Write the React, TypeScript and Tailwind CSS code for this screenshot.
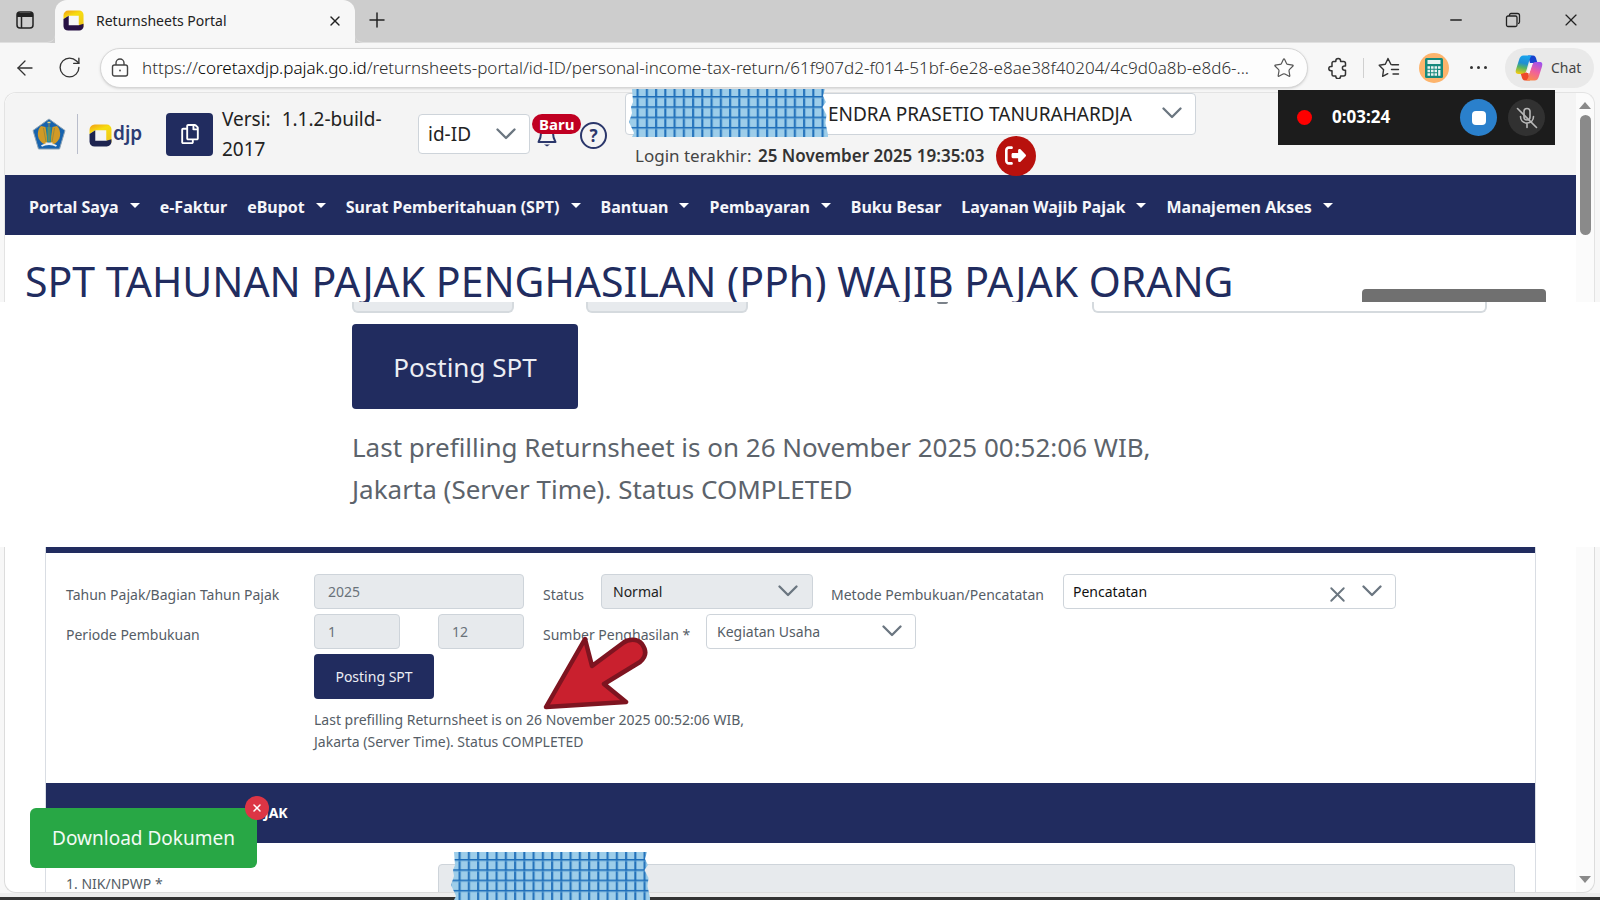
import React from "react";
import { ArrowLeft, Minus, Plus, RotateCw, Star, X } from "lucide-react";
import { FaRegCopy } from "react-icons/fa";
import { FaRightFromBracket } from "react-icons/fa6";

function ChevronDown({ className }: { className: string }) {
  return (
    <svg viewBox="0 0 20 12" fill="none" stroke="#6b7680" strokeWidth="2.300" strokeLinecap="round" strokeLinejoin="round" className={`pointer-events-none absolute h-3 w-5 ${className}`}>
      <path d="M1.500 1.500 10 10l8.500-8.500" />
    </svg>
  );
}

function CoretaxMark({ id, className, dark }: { id: string; className: string; dark: string }) {
  return (
    <svg viewBox="0 0 22 22" className={className} aria-hidden="true">
      <defs>
        <linearGradient id={id} x1="0.150" y1="0" x2="0.600" y2="1">
          <stop offset="0" stopColor="#f2a516" />
          <stop offset="0.350" stopColor="#f7dd10" />
          <stop offset="1" stopColor="#eec81c" />
        </linearGradient>
      </defs>
      <path d="M5.500 .5H17A4.500 4.500 0 0 1 21.500 5v13L16.500 15.500V6H6L.5 9.500V5.500A5 5 0 0 1 5.500 .5Z" fill={`url(#${id})`} />
      <path d="M.5 9.500 6 6v10h10.500L21.500 14.500V17A4.500 4.500 0 0 1 17 21.500H5.500A5 5 0 0 1 .5 17Z" fill={dark} />
    </svg>
  );
}

function MinistryEmblem() {
  return (
    <svg viewBox="0 0 34 32" className="h-8 w-[34px] shrink-0" role="img" aria-label="Kementerian Keuangan">
      <path d="M17 1 33 12.500 27.500 31H6.500L1 12.500Z" fill="#1763ae" stroke="#8da3b4" strokeWidth="1" strokeLinejoin="round" />
      <path d="M9 8C4 13 4.500 23 13 26.500l3-2.500-2.500-15Z" fill="#d19a26" />
      <path d="M25 8c5 5 4.500 15-4 18.500L18 24l2.500-15Z" fill="#d19a26" />
      <path d="M14.500 9h5l-.5 15h-4Z" fill="#2b8f95" />
      <path d="M17 6v17M11.500 10l2.500 14M22.500 10 20 24" stroke="#9c8a3a" strokeWidth="1" />
      <path d="M9.500 28c4-2.500 11-2.500 15 0M13.500 25.500h7" stroke="#e9eef2" strokeWidth="1.800" fill="none" />
      <path d="M15.500 4.500h3" stroke="#e8d77a" strokeWidth="1.500" />
    </svg>
  );
}

function CopilotLogo() {
  return (
    <svg viewBox="0 0 28 26" className="h-[26px] w-7 shrink-0" aria-hidden="true">
      <defs>
        <linearGradient id="cpA" x1="0.500" y1="0" x2="0.300" y2="1">
          <stop offset="0" stopColor="#18a4ee" />
          <stop offset="0.400" stopColor="#1f8ed2" />
          <stop offset="0.650" stopColor="#58b461" />
          <stop offset="1" stopColor="#f2cb12" />
        </linearGradient>
        <linearGradient id="cpB" x1="0.700" y1="0" x2="0.300" y2="1">
          <stop offset="0" stopColor="#a052ec" />
          <stop offset="0.500" stopColor="#f0609c" />
          <stop offset="1" stopColor="#fb8a4c" />
        </linearGradient>
      </defs>
      <path d="M13 .5h5c2 0 2.600 1.300 3.200 3.200l1.300 4.300H15Z" fill="#1442cf" />
      <path d="M8.500 .5h8.500c-1.500 1-2 2.600-2.600 4.600L11.500 15c-.8 2.800-1.800 4-4.500 4H3.500C.5 19 .3 17 1 14.500L4 5C4.900 2 6 .5 8.500 .5Z" fill="url(#cpA)" />
      <path d="M15 25.500h-5c-2 0-2.600-1.300-3.200-3.200L5.800 18.900 13 17Z" fill="#ee4a2a" />
      <path d="M19.500 25.500H11c1.500-1 2-2.600 2.600-4.600L16.500 11c.8-2.800 1.800-4 4.500-4h3.500c3 0 3.200 2 2.500 4.500L24 21c-.9 3-2 4.500-4.500 4.500Z" fill="url(#cpB)" />
      <path d="M15 8h3l-3.500 10h-3Z" fill="#f7f3f6" />
    </svg>
  );
}

function Tape({ id, className }: { id: string; className: string }) {
  return (
    <svg viewBox="0 0 199 48" className={`pointer-events-none absolute h-12 w-[199px] ${className}`} aria-hidden="true">
      <defs>
        <pattern id={id} width="9.250" height="10.300" patternUnits="userSpaceOnUse" x="1" y="7">
          <rect width="9.250" height="10.300" fill="#9dcde9" />
          <rect width="1.700" height="10.300" x="6.600" fill="#1b6cb8" />
          <rect width="0.900" height="10.300" x="8.300" fill="#6fadd9" />
          <rect width="9.250" height="1.600" y="0" fill="#1b6cb8" />
          <rect width="9.250" height="0.700" y="1.600" fill="#6fadd9" />
        </pattern>
      </defs>
      <path d="M3 0H196L194 7l3 6-3.500 5 4 8-1 8 3 14H3L5 44 0 33l3-9-1-6 2-5Z" fill={`url(#${id})`} />
    </svg>
  );
}

function TabStrip() {
  return (
    <header className="flex h-[43px] shrink-0 items-stretch bg-[#cdcdcd]">
      <div className="flex w-[55px] items-center rounded-br-lg border-b border-[#e0e0e0] pb-[2px] pl-4">
        <button aria-label="Tab actions">
          <svg viewBox="0 0 18 18" className="h-[18px] w-[18px]" fill="none" stroke="#222" strokeWidth="1.500">
            <rect x="1" y="1" width="16" height="16" rx="3" />
            <path d="M1 3.500h16M1 4.500h16" strokeWidth="3" />
            <path d="M5.500 5v12" />
          </svg>
        </button>
      </div>
      <div className="flex w-[300px] items-center rounded-t-xl bg-[#f7f7f7] pb-[2px] pl-2 pr-3">
        <CoretaxMark id="tabMark" className="h-[21px] w-[21px]" dark="#271144" />
        <span className="ml-3 flex-1 text-[14px] leading-5 text-[#222]">Returnsheets Portal</span>
        <button aria-label="Close tab"><X className="h-4 w-4" strokeWidth={2} color="#222" /></button>
      </div>
      <div className="flex flex-1 items-center rounded-bl-lg border-b border-[#e0e0e0] pb-[2px] pl-[10px] pr-[19px]">
        <button aria-label="New tab"><Plus className="h-6 w-6" strokeWidth={1.500} color="#222" /></button>
        <div className="ml-auto flex items-center gap-[40px]">
          <button aria-label="Minimize"><Minus className="h-[18px] w-[18px]" strokeWidth={1.800} color="#222" /></button>
          <button aria-label="Restore">
            <svg viewBox="0 0 16 16" className="h-4 w-4" fill="none" stroke="#222" strokeWidth="1.300">
              <rect x="1.500" y="4" width="10.500" height="10.500" rx="1.500" />
              <path d="M4.500 4V3a1.500 1.500 0 0 1 1.500-1.500h6.500A2 2 0 0 1 14.500 3.500V10A1.500 1.500 0 0 1 13 11.500" />
            </svg>
          </button>
          <button aria-label="Close window"><X className="h-5 w-5" strokeWidth={1.400} color="#222" /></button>
        </div>
      </div>
    </header>
  );
}

function Toolbar() {
  return (
    <div className="flex h-[49px] shrink-0 items-center bg-[#f7f7f7] pr-[6px]">
      <button aria-label="Back" className="ml-[13px]"><ArrowLeft className="h-6 w-6" strokeWidth={1.300} color="#333" /></button>
      <button aria-label="Reload" className="ml-[20px]"><RotateCw className="h-[25px] w-[25px]" strokeWidth={1.300} color="#333" /></button>
      <div className="ml-[18px] flex h-10 min-w-0 flex-1 items-center rounded-full border border-[#d6d6d6] bg-[#fdfdfd] pl-[10px] pr-3 shadow-sm">
        <svg viewBox="0 0 18 20" className="h-5 w-[18px] shrink-0" fill="none" stroke="#444" strokeWidth="1.400">
          <rect x="1.500" y="7" width="15" height="11" rx="2" />
          <path d="M5 7V5a4 4 0 0 1 8 0v2" />
          <circle cx="9" cy="12.500" r="0.900" fill="#444" stroke="none" />
        </svg>
        <p className="ml-[13px] min-w-0 flex-1 whitespace-nowrap text-[17px] font-light leading-6 text-[#2f2f2f]">
          https://<span className="text-black">coretaxdjp.pajak.go.id</span>/returnsheets-portal/id-ID/personal-income-tax-return/61f907d2-f014-51bf-6e28-e8ae38f40204/4c9d0a8b-e8d6-...
        </p>
        <button aria-label="Favorite"><Star className="h-[22px] w-[22px]" strokeWidth={1.300} color="#555" /></button>
      </div>
      <button aria-label="Extensions" className="ml-[20px]">
        <svg viewBox="0 0 20 22" className="h-[22px] w-5" fill="none" stroke="#333" strokeWidth="1.500" strokeLinejoin="round">
          <path d="M5.500 4.500h2.300V3.800a2.400 2.400 0 0 1 4.800 0v.7H15.500a2 2 0 0 1 2 2V9h-1a2 2 0 0 0 0 4.200h1V17a2 2 0 0 1-2 2h-2.900v.3a2.400 2.400 0 0 1-4.800 0V19H5.500A1.500 1.500 0 0 1 4 17.500v-3.700H3a2.200 2.200 0 0 1 0-4.400h1V6A1.500 1.500 0 0 1 5.500 4.500Z" />
        </svg>
      </button>
      <span className="ml-[15px] h-5 w-px bg-[#d0d0d0]" />
      <button aria-label="Favorites" className="ml-[14px]">
        <svg viewBox="0 0 22 22" className="h-[22px] w-[22px]" fill="none" stroke="#333" strokeWidth="1.400" strokeLinejoin="round" strokeLinecap="round">
          <path d="M13 7.500 10 1.500 7.300 7.300 1.200 8.200l4.400 4.500-1 6.700 5.200-2.700 M14 7.800h6.500M13.500 12.500h7M15 17h5.500" />
        </svg>
      </button>
      <button aria-label="Tax calculator" className="ml-[19px] flex h-[30px] w-[30px] items-center justify-center rounded-full bg-[#fdb46c]">
        <svg viewBox="0 0 18 20" className="h-5 w-[18px]">
          <rect width="18" height="20" rx="1.500" fill="#15897c" />
          <rect x="2.500" y="2" width="13" height="4" fill="#e9f3f1" />
          <path d="M2.500 9.500h13M2.500 13h9.500M2.500 16.500h9.500" stroke="#e9f3f1" strokeWidth="2.300" strokeDasharray="2.600 0.900" />
          <path d="M14.300 12v5.800" stroke="#e9f3f1" strokeWidth="2.300" />
        </svg>
      </button>
      <button aria-label="Settings" className="ml-[17px] flex gap-1 p-1">
        <span className="h-[3px] w-[3px] rounded-full bg-[#333]" />
        <span className="h-[3px] w-[3px] rounded-full bg-[#333]" />
        <span className="h-[3px] w-[3px] rounded-full bg-[#333]" />
      </button>
      <button className="ml-[14px] flex h-10 w-[89px] items-center gap-2 rounded-full bg-[#e9e9e9] pl-[10px] text-[14px] text-[#444]">
        <CopilotLogo />
        Chat
      </button>
    </div>
  );
}

function SiteHeader() {
  return (
    <div className="flex h-[82px] items-center rounded-tl-xl bg-[#f4f4f4] pl-[27px]">
      <MinistryEmblem />
      <span className="ml-[11px] h-10 w-px bg-[#b9bdcb]" />
      <div className="ml-[11px] flex w-[56px] items-center gap-px pt-[2px]">
        <CoretaxMark id="headMark" className="h-[23px] w-[23px] shrink-0" dark="#1d2450" />
        <span className="pb-1 text-[19px] font-semibold leading-6 text-[#2c3c73]">djp</span>
      </div>
      <button aria-label="Salin versi" className="ml-[21px] flex h-[43px] w-[47px] items-center justify-center rounded bg-[#212c5f] text-white">
        <FaRegCopy className="h-5 w-5" />
      </button>
      <p className="ml-[9px] w-[186px] text-[19px] leading-[30px] text-[#222]">
        Versi: <span className="ml-[6px]">1.1.2-build-</span><br />2017
      </p>
      <div className="relative ml-[10px]">
        <select aria-label="Bahasa" className="h-10 w-[112px] appearance-none rounded border border-[#ced4da] bg-white pl-[9px] text-[19px] text-[#222]">
          <option>id-ID</option>
        </select>
        <ChevronDown className="right-[14px] top-[14px]" />
      </div>
      <div className="relative ml-[7px] flex items-center pt-[3px]">
        <button aria-label="Notifikasi">
          <svg viewBox="0 0 20 22" className="h-[22px] w-5" fill="none" stroke="#2b376b" strokeWidth="2" strokeLinejoin="round">
            <path d="M10 1.500c-4 0-6 3-6 6.500 0 4-1 6.500-2.500 9h17C17 14.500 16 12 16 8c0-3.500-2-6.500-6-6.500Z" />
            <path d="M7 19.500h6l-3 2Z" fill="#2b376b" stroke="none" />
          </svg>
        </button>
        <span className="absolute -left-[5px] -top-[5px] rounded-full bg-[#c00022] px-[7px] text-[15px] font-bold leading-5 text-white">Baru</span>
        <button aria-label="Bantuan" className="ml-[23px] flex h-[27px] w-[27px] items-center justify-center rounded-full border-2 border-[#2b376b] text-[17px] font-bold leading-5 text-[#2b376b]">?</button>
      </div>
      <div className="ml-[18px] flex w-[571px] flex-col self-stretch">
        <div className="relative">
          <select aria-label="Wajib pajak" className="h-[42px] w-full appearance-none rounded border border-[#ced4da] bg-white pl-[202px] text-[19px] text-[#222]">
            <option>ENDRA PRASETIO TANURAHARDJA</option>
          </select>
          <ChevronDown className="right-[14px] top-[14px]" />
          <Tape id="tapeName" className="-top-[4px] left-[4px]" />
        </div>
        <div className="flex h-10 items-center pl-[10px] pt-px text-[17px] text-[#444]">
          <span className="w-[123px]">Login terakhir:</span>
          <strong className="font-semibold text-[#333]">25 November 2025 19:35:03</strong>
          <button aria-label="Keluar" className="ml-[11px] flex h-10 w-10 items-center justify-center rounded-full bg-[#b8110d] text-white">
            <FaRightFromBracket className="h-[21px] w-[21px]" />
          </button>
        </div>
      </div>
    </div>
  );
}

const MENU: { label: string; caret: boolean }[] = [
  { label: "Portal Saya", caret: true },
  { label: "e-Faktur", caret: false },
  { label: "eBupot", caret: true },
  { label: "Surat Pemberitahuan (SPT)", caret: true },
  { label: "Bantuan", caret: true },
  { label: "Pembayaran", caret: true },
  { label: "Buku Besar", caret: false },
  { label: "Layanan Wajib Pajak", caret: true },
  { label: "Manajemen Akses", caret: true },
];

function SiteNav() {
  return (
    <nav className="flex h-[60px] items-center gap-5 bg-[#212c5f] pl-6 pt-[3px]">
      {MENU.map((item) => (
        <a key={item.label} href="#" className="flex items-center gap-[11px] whitespace-nowrap text-[16px] font-bold text-[#f5f6fa]">
          {item.label}
          {item.caret && <span className="mb-[3px] border-x-[5px] border-t-[5px] border-x-transparent border-t-white" />}
        </a>
      ))}
    </nav>
  );
}

function PostingCallout() {
  return (
    <section className="relative z-10 h-[245px] shrink-0 bg-white pl-[352px]">
      <div className="flex h-[11px]">
        <span className="w-[162px] rounded-b-md border-2 border-t-0 border-[#d5dade] bg-[#e7eaed]" />
        <span className="ml-[72px] w-[162px] rounded-b-md border-2 border-t-0 border-[#d5dade] bg-[#e7eaed]" />
        <span className="ml-[189px] h-[2px] w-[11px] rounded-b-full bg-[#7b828a]" />
        <span className="ml-[144px] w-[395px] rounded-b-md border-2 border-t-0 border-[#d5dade] bg-white" />
      </div>
      <button className="mt-[11px] block h-[85px] w-[226px] rounded bg-[#212c5f] pt-[2px] text-[26px] text-[#eceef4]">Posting SPT</button>
      <p className="mt-[17px] text-[26px] leading-[42px] text-[#5c636b]">
        Last prefilling Returnsheet is on 26 November 2025 00:52:06 WIB,<br />Jakarta (Server Time). Status COMPLETED
      </p>
    </section>
  );
}

function ReturnForm() {
  return (
    <form className="px-5 pt-[21px] text-[14px] text-[#555d66]">
      <div className="flex h-[35px] items-center">
        <label htmlFor="year" className="w-[248px] pt-[6px]">Tahun Pajak/Bagian Tahun Pajak</label>
        <input id="year" disabled value="2025" className="h-[35px] w-[210px] rounded border border-[#ced4da] bg-[#e7eaed] px-[13px] text-[#6a727a]" />
        <label htmlFor="status" className="ml-[19px] w-[58px] pt-[6px]">Status</label>
        <div className="relative">
          <select id="status" disabled className="h-[35px] w-[212px] appearance-none rounded border border-[#ced4da] bg-[#e7eaed] pl-[11px] text-[#222] opacity-100">
            <option>Normal</option>
          </select>
          <ChevronDown className="right-[15px] top-[11px]" />
        </div>
        <label htmlFor="method" className="ml-[18px] w-[232px] pt-[6px]">Metode Pembukuan/Pencatatan</label>
        <div className="relative">
          <select id="method" className="h-[35px] w-[333px] appearance-none rounded border border-[#ced4da] bg-white pl-[9px] text-[#111]">
            <option>Pencatatan</option>
          </select>
          <button type="button" aria-label="Hapus pilihan" className="absolute right-[46px] top-[8px]"><X className="h-[25px] w-[25px]" strokeWidth={1.800} color="#6b7680" /></button>
          <ChevronDown className="right-[14px] top-[11px]" />
        </div>
      </div>
      <div className="mt-[5px] flex h-[35px] items-center">
        <label htmlFor="from" className="w-[248px] pt-[6px]">Periode Pembukuan</label>
        <input id="from" disabled value="1" className="h-[35px] w-[86px] rounded border border-[#ced4da] bg-[#e7eaed] px-[13px] text-[#6a727a]" />
        <input aria-label="Bulan akhir" disabled value="12" className="ml-[38px] h-[35px] w-[86px] rounded border border-[#ced4da] bg-[#e7eaed] px-[13px] text-[#6a727a]" />
        <label htmlFor="source" className="ml-[19px] w-[163px] pt-[6px]">Sumber Penghasilan *</label>
        <div className="relative">
          <select id="source" className="h-[35px] w-[210px] appearance-none rounded border border-[#ced4da] bg-white pl-[10px] text-[#555d66]">
            <option>Kegiatan Usaha</option>
          </select>
          <ChevronDown className="right-[14px] top-[11px]" />
        </div>
      </div>
      <div className="ml-[248px] mt-[5px]">
        <button type="button" className="block h-[45px] w-[120px] rounded bg-[#212c5f] text-[14px] text-[#eceef4]">Posting SPT</button>
        <p className="mt-[10px] pb-[30px] leading-[22px]">
          Last prefilling Returnsheet is on 26 November 2025 00:52:06 WIB,<br />Jakarta (Server Time). Status COMPLETED
        </p>
      </div>
    </form>
  );
}

export default function App() {
  return (
    <div className="relative flex h-screen flex-col overflow-hidden bg-[#f7f7f7] font-['Noto_Sans','Open_Sans',sans-serif]">
      <TabStrip />
      <Toolbar />

      <div className="flex h-[210px] shrink-0 pl-1 pr-[5px]">
        <main className="min-w-0 flex-1 rounded-tl-xl border-l border-t border-[#e3e3e3] bg-white">
          <SiteHeader />
          <SiteNav />
          <div className="flex h-[67px] items-start justify-between pl-[20px] pr-[30px]">
            <h1 className="pt-[16px] text-[41px] leading-[60px] whitespace-nowrap text-[#212c5f]">SPT TAHUNAN PAJAK PENGHASILAN (PPh) WAJIB PAJAK ORANG</h1>
            <span className="mt-[54px] h-[13px] w-[184px] rounded-t bg-[#707070]" />
          </div>
        </main>
        <div className="flex w-[19px] flex-col items-center rounded-tr-xl border-r border-t border-[#e3e3e3] bg-[#fbfbfb] pt-[9px]">
          <span className="border-x-[6px] border-b-[7px] border-x-transparent border-b-[#8a8a8a]" />
          <span className="mt-[6px] h-[120px] w-[11px] rounded-full bg-[#8a8a8a]" />
        </div>
      </div>

      <PostingCallout />

      <div className="flex min-h-0 flex-1 pl-1 pr-[5px]">
        <section className="min-w-0 flex-1 overflow-hidden rounded-bl-xl border-b border-l border-[#dcdcdc] bg-white pl-[40px] pr-[40px]">
          <div className="border-x border-[#d9dde3]">
            <div className="h-[6px] bg-[#212c5f]" />
            <ReturnForm />
            <h2 className="flex h-[60px] items-center bg-[#212c5f] pb-[2px] pl-[218px] text-[14px] font-bold text-white">JAK</h2>
            <div className="flex items-start pb-4 pl-5 pr-5 pt-[21px]">
              <label htmlFor="nik" className="w-[372px] pt-[10px] text-[14px] leading-5 text-[#555d66]">1. NIK/NPWP *</label>
              <div className="flex-1">
                <input id="nik" disabled className="h-[35px] w-full rounded border border-[#ced4da] bg-[#e7eaed]" />
              </div>
            </div>
          </div>
        </section>
        <div className="flex w-[19px] flex-col items-center justify-end rounded-br-xl border-b border-r border-[#dcdcdc] bg-[#fbfbfb] pb-[9px]">
          <span className="border-x-[6px] border-t-[7px] border-x-transparent border-t-[#8a8a8a]" />
        </div>
      </div>
      <div className="h-[4px] shrink-0 bg-[#ededed]" />
      <div className="h-[3px] shrink-0 bg-[#333]" />

      <Tape id="tapeNik" className="bottom-0 left-[451px]" />

      <svg viewBox="0 0 108 78" className="pointer-events-none absolute left-[541px] top-[633px] h-[78px] w-[108px]" aria-hidden="true">
        <path d="M5 74 44 6l7 27 31-23c5-4 14-5 19 1 5 7 4 13-2 18L63 51l22 18Z" fill="#c9202e" stroke="#7e1420" strokeWidth="4.500" strokeLinejoin="round" />
      </svg>

      <div className="absolute right-[45px] top-[90px] z-20 flex h-[55px] w-[277px] items-center bg-[#1c1c1c] pl-[19px] pr-[10px]">
        <span className="h-[15px] w-[15px] rounded-full bg-[#fd0000]" />
        <span className="ml-[20px] flex-1 pb-[2px] text-[17px] font-bold text-white">0:03:24</span>
        <button aria-label="Stop recording" className="flex h-[37px] w-[37px] items-center justify-center rounded-full bg-[#2a80cc]">
          <span className="h-[14px] w-[14px] rounded-sm bg-white" />
        </button>
        <button aria-label="Unmute microphone" className="ml-[11px] flex h-[37px] w-[37px] items-center justify-center rounded-full bg-[#313131]">
          <svg viewBox="0 0 22 22" className="h-[22px] w-[22px]" fill="none" stroke="#b9b9b9" strokeWidth="1.600" strokeLinecap="round">
            <rect x="8" y="1.500" width="6" height="11.500" rx="3" />
            <path d="M4.500 9.500c0 4 2.600 6.500 6.500 6.500s6.500-2.500 6.500-6.500M11 16v4.500" />
            <path d="M1.500 1.500 20.500 20.500" />
          </svg>
        </button>
      </div>

      <div className="absolute bottom-[32px] left-[30px] z-20">
        <button className="h-[60px] w-[227px] rounded-md bg-[#28a745] text-[19px] text-[#f2faf4]">Download Dokumen</button>
        <button aria-label="Tutup" className="absolute -right-[12px] -top-[12px] flex h-6 w-6 items-center justify-center rounded-full bg-[#dc3545]">
          <X className="h-3 w-3" strokeWidth={3} color="#fff" />
        </button>
      </div>
    </div>
  );
}
